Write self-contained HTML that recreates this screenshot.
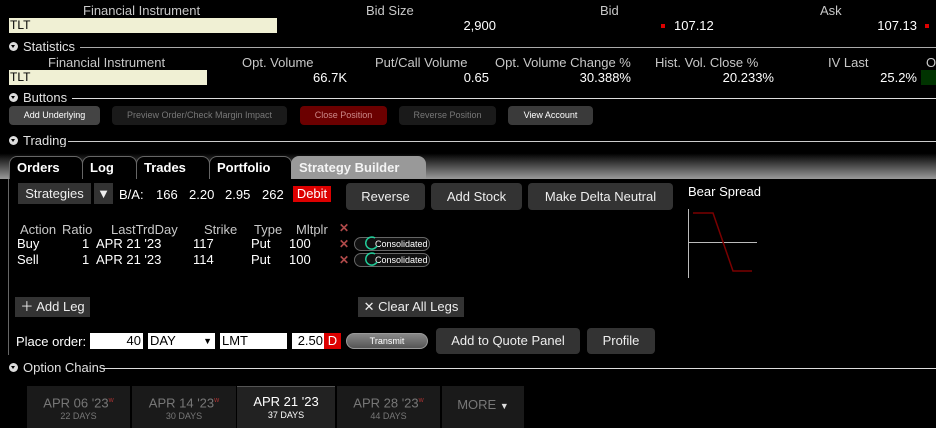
<!DOCTYPE html>
<html><head><meta charset="utf-8"><style>
*{margin:0;padding:0;box-sizing:border-box}
body{width:936px;height:428px;background:#000;overflow:hidden;position:relative;font-family:"Liberation Sans",sans-serif;font-size:13px;color:#fff}
.a{position:absolute;white-space:nowrap}
.h{color:#c8c8c8}
.r{text-align:right}
.yb{position:absolute;background:#f0f0d4;color:#000;font-size:12px;padding-left:1px;line-height:15px}
.sec{position:absolute;left:9px;font-size:13px;color:#e0e0e0;line-height:14px}
.sec i{display:inline-block;width:9px;height:9px;border-radius:50%;background:#ddd;margin-right:5px;vertical-align:0px;position:relative}
.sec i:after{content:"";position:absolute;left:2px;top:3px;border-left:2.5px solid transparent;border-right:2.5px solid transparent;border-top:3px solid #000}
.ln{position:absolute;height:1px;background:#aaa;right:0}
.sb{position:absolute;font-size:9px;text-align:center;line-height:19px;border-radius:4px;height:19px;top:106px}
.btn{position:absolute;background:#333;border-radius:4px;text-align:center;color:#eee;font-size:13px}
.tab{position:absolute;top:156px;height:23px;background:#000;border:1px solid #666;border-bottom:none;border-radius:8px 8px 0 0;font-weight:bold;font-size:13px;line-height:21px;padding-left:7px;color:#fff}
.x{position:absolute;color:#b04a4a;font-weight:bold;font-size:12px}
.pill{position:absolute;left:354px;width:76px;height:14px;border:1px solid #666;border-radius:7px;background:#111;font-size:9px;line-height:12px;padding-left:20px;color:#fff}
.inp{position:absolute;top:333px;height:16px;background:#fff;color:#000;font-size:13px;line-height:16px;padding:0 2px}
.ct{position:absolute;top:386px;height:42px;background:#1a1a1a;text-align:center;color:#777;font-size:13px;line-height:15px;padding-top:7px}
.ct small{display:block;font-size:9px;line-height:12px}
.ct sup{color:#a33;font-size:7px}
</style></head><body>
<div class="a h" style="left:83px;top:3px">Financial Instrument</div>
<div class="a h" style="left:366px;top:3px">Bid Size</div>
<div class="a h" style="left:600px;top:3px">Bid</div>
<div class="a h" style="left:820px;top:3px">Ask</div>
<div class="yb" style="left:9px;top:18px;width:268px">TLT</div>
<div class="a r" style="right:440px;top:18px">2,900</div>
<div class="a" style="left:661px;top:24px;width:4px;height:4px;background:#d00"></div>
<div class="a" style="left:674px;top:18px">107.12</div>
<div class="a r" style="right:19px;top:18px">107.13</div>
<div class="a" style="left:925px;top:24px;width:4px;height:4px;background:#d00"></div>

<div class="ln" style="left:80px;top:47px"></div>
<div class="sec" style="top:40px"><i></i>Statistics</div>
<div class="a h" style="left:48px;top:55px">Financial Instrument</div>
<div class="a h" style="left:242px;top:55px">Opt. Volume</div>
<div class="a h" style="left:375px;top:55px">Put/Call Volume</div>
<div class="a h" style="left:495px;top:55px">Opt. Volume Change %</div>
<div class="a h" style="left:655px;top:55px">Hist. Vol. Close %</div>
<div class="a h" style="left:828px;top:55px">IV Last</div>
<div class="a h" style="left:926px;top:55px">O</div>
<div class="yb" style="left:9px;top:70px;width:198px">TLT</div>
<div class="a r" style="right:589px;top:70px">66.7K</div>
<div class="a r" style="right:447px;top:70px">0.65</div>
<div class="a r" style="right:305px;top:70px">30.388%</div>
<div class="a r" style="right:162px;top:70px">20.233%</div>
<div class="a r" style="right:19px;top:70px">25.2%</div>
<div class="a" style="left:921px;top:70px;width:15px;height:15px;background:#003300"></div>

<div class="ln" style="left:72px;top:98px;background:#ddd"></div>
<div class="sec" style="top:91px"><i></i>Buttons</div>
<div class="sb" style="left:9px;width:91px;background:#444;color:#fff">Add Underlying</div>
<div class="sb" style="left:112px;width:175px;background:#1a1a1a;color:#777">Preview Order/Check Margin Impact</div>
<div class="sb" style="left:300px;width:87px;background:#6b0000;color:#c88">Close Position</div>
<div class="sb" style="left:399px;width:97px;background:#1a1a1a;color:#777">Reverse Position</div>
<div class="sb" style="left:508px;width:85px;background:#3a3a3a;color:#fff">View Account</div>

<div class="ln" style="left:68px;top:141px;background:#ccc"></div>
<div class="sec" style="top:134px"><i></i>Trading</div>
<div class="a" style="left:0;top:147px;width:936px;height:32px;background:linear-gradient(#000 20%,#9a9a9a)"></div>
<div class="tab" style="left:9px;width:74px">Orders</div>
<div class="tab" style="left:82px;width:55px">Log</div>
<div class="tab" style="left:136px;width:74px">Trades</div>
<div class="tab" style="left:209px;width:83px">Portfolio</div>
<div class="tab" style="left:291px;width:135px;background:#999;border-color:#999;color:#f4f4f4">Strategy Builder</div>
<div class="a" style="left:8px;top:179px;width:1px;height:176px;background:#666"></div>

<div class="btn" style="left:18px;top:183px;width:73px;height:21px;line-height:21px;border-radius:0">Strategies</div>
<div class="btn" style="left:94px;top:183px;width:19px;height:21px;line-height:21px;border-radius:0">▼</div>
<div class="a" style="left:119px;top:187px">B/A:</div>
<div class="a" style="left:156px;top:187px">166</div>
<div class="a" style="left:189px;top:187px">2.20</div>
<div class="a" style="left:225px;top:187px">2.95</div>
<div class="a" style="left:262px;top:187px">262</div>
<div class="a" style="left:293px;top:186px;width:38px;height:16px;background:#d00;text-align:center;line-height:16px">Debit</div>
<div class="btn" style="left:346px;top:183px;width:79px;height:27px;line-height:27px">Reverse</div>
<div class="btn" style="left:431px;top:183px;width:91px;height:27px;line-height:27px">Add Stock</div>
<div class="btn" style="left:528px;top:183px;width:145px;height:27px;line-height:27px">Make Delta Neutral</div>
<div class="a" style="left:688px;top:184px">Bear Spread</div>
<svg class="a" style="left:0;top:0" width="936" height="428"><line x1="688.5" y1="209" x2="688.5" y2="278" stroke="#bbb"/><line x1="688" y1="242.5" x2="757" y2="242.5" stroke="#bbb"/><polyline points="693,213 713,213 733,271 752,271" fill="none" stroke="#7a0000" stroke-width="1.5"/></svg>

<div class="a h" style="left:20px;top:222px">Action</div>
<div class="a h" style="left:62px;top:222px">Ratio</div>
<div class="a h" style="left:111px;top:222px">LastTrdDay</div>
<div class="a h" style="left:204px;top:222px">Strike</div>
<div class="a h" style="left:254px;top:222px">Type</div>
<div class="a h" style="left:296px;top:222px">Mltplr</div>
<div class="x" style="left:339px;top:221px">✕</div>
<div class="a" style="left:17px;top:236px">Buy</div><div class="a" style="left:82px;top:236px">1</div><div class="a" style="left:96px;top:236px">APR 21 '23</div><div class="a" style="left:193px;top:236px">117</div><div class="a" style="left:251px;top:236px">Put</div><div class="a" style="left:289px;top:236px">100</div>
<div class="x" style="left:339px;top:237px">✕</div>
<div class="pill" style="top:237px">Consolidated</div>
<div class="a" style="left:17px;top:252px">Sell</div><div class="a" style="left:82px;top:252px">1</div><div class="a" style="left:96px;top:252px">APR 21 '23</div><div class="a" style="left:193px;top:252px">114</div><div class="a" style="left:251px;top:252px">Put</div><div class="a" style="left:289px;top:252px">100</div>
<div class="x" style="left:339px;top:253px">✕</div>
<div class="pill" style="top:253px">Consolidated</div>
<svg class="a" style="left:0;top:0" width="936" height="428"><g fill="none" stroke="#2c9" stroke-width="1.5"><path d="M375 238 A6 6 0 1 0 377 246"/><path d="M375 254 A6 6 0 1 0 377 262"/></g></svg>

<div class="btn" style="left:15px;top:297px;width:75px;height:20px;line-height:20px;border-radius:0;font-size:13px">＋ Add Leg</div>
<div class="btn" style="left:358px;top:297px;width:106px;height:20px;line-height:20px;border-radius:0">✕ Clear All Legs</div>

<div class="a" style="left:16px;top:334px">Place order:</div>
<div class="inp r" style="left:90px;width:53px">40</div>
<div class="inp" style="left:148px;width:67px">DAY<span style="position:absolute;right:3px;font-size:9px">▼</span></div>
<div class="inp" style="left:220px;width:67px">LMT</div>
<div class="inp r" style="left:292px;width:32px;padding:0 1px">2.50</div>
<div class="inp" style="left:324px;width:17px;background:#d00;color:#fff;text-align:center">D</div>
<div class="a" style="left:346px;top:333px;width:82px;height:16px;border-radius:8px;background:linear-gradient(#888,#555);border:1px solid #999;font-size:9px;text-align:center;line-height:14px">Transmit</div>
<div class="btn" style="left:436px;top:328px;width:144px;height:26px;line-height:26px">Add to Quote Panel</div>
<div class="btn" style="left:587px;top:328px;width:68px;height:26px;line-height:26px">Profile</div>

<div class="ln" style="left:103px;top:368px;background:#ddd"></div>
<div class="sec" style="top:361px"><i></i>Option Chains</div>
<div class="ct" style="left:27px;width:103px">APR 06 '23<sup>w</sup><small>22 DAYS</small></div>
<div class="ct" style="left:132px;width:104px">APR 14 '23<sup>w</sup><small>30 DAYS</small></div>
<div class="ct" style="left:237px;width:98px;background:#222;color:#fff;border-top:1px solid #555">APR 21 '23<small>37 DAYS</small></div>
<div class="ct" style="left:337px;width:103px">APR 28 '23<sup>w</sup><small>44 DAYS</small></div>
<div class="ct" style="left:442px;width:82px;line-height:22px;padding-top:8px">MORE <span style="color:#ddd;font-size:9px">▼</span></div>
</body></html>
